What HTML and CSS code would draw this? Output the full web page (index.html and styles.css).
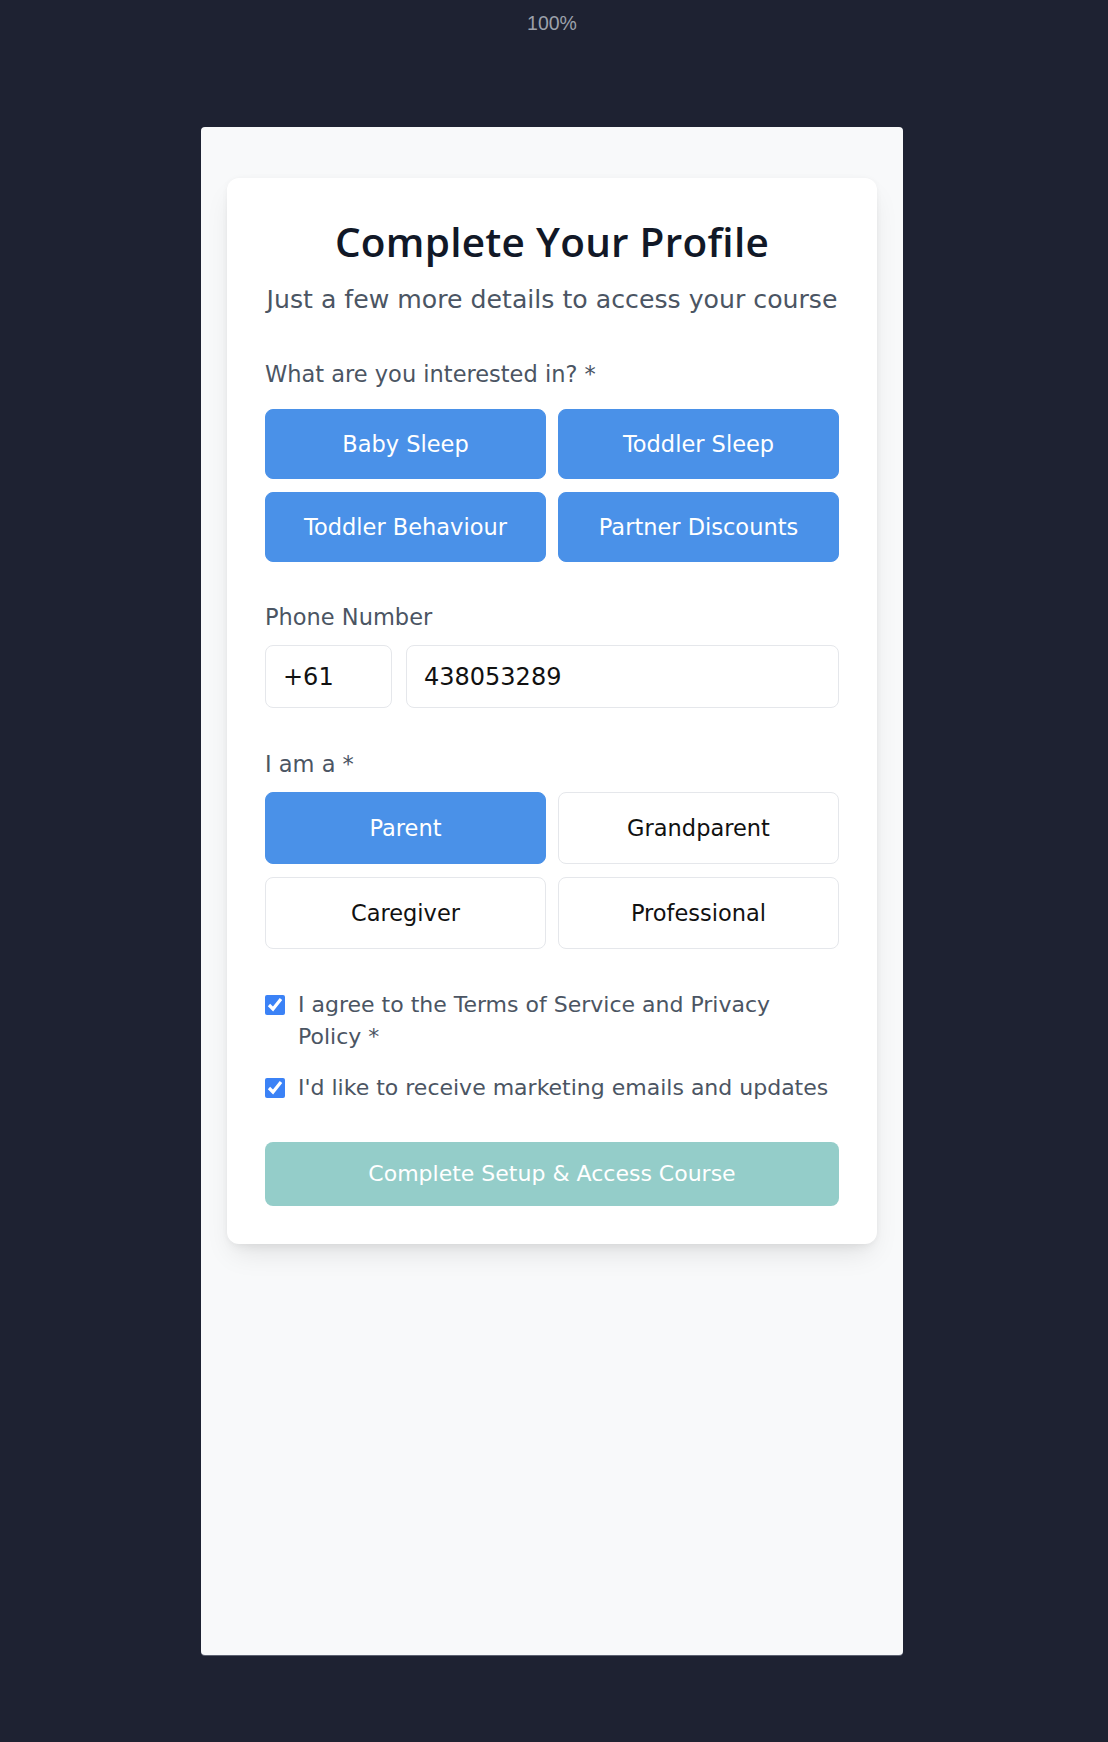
FILE: index.html
```html
<!DOCTYPE html>
<html lang="en">
<head>
<meta charset="utf-8">
<title>Complete Your Profile</title>
<link rel="stylesheet" href="styles.css">
</head>
<body>
<div class="page">
  <div class="zoombar">100%</div>
  <div class="frame">
    <div class="card">
      <h1 class="title">Complete Your Profile</h1>
      <p class="subtitle">Just a few more details to access your course</p>

      <section class="field field-interest">
        <div class="label">What are you interested in? *</div>
        <div class="choice-grid grid-interest">
          <div class="choice selected">Baby Sleep</div>
          <div class="choice selected">Toddler Sleep</div>
          <div class="choice selected">Toddler Behaviour</div>
          <div class="choice selected">Partner Discounts</div>
        </div>
      </section>

      <section class="field field-phone">
        <div class="label">Phone Number</div>
        <div class="phone-row">
          <div class="input">+61</div>
          <div class="input">438053289</div>
        </div>
      </section>

      <section class="field field-role">
        <div class="label">I am a *</div>
        <div class="choice-grid grid-role">
          <div class="choice selected">Parent</div>
          <div class="choice">Grandparent</div>
          <div class="choice">Caregiver</div>
          <div class="choice">Professional</div>
        </div>
      </section>

      <section class="field consents">
        <label class="consent">
          <input type="checkbox" checked>
          <span>I agree to the Terms of Service and Privacy Policy *</span>
        </label>
        <label class="consent">
          <input type="checkbox" checked>
          <span>I'd like to receive marketing emails and updates</span>
        </label>
      </section>

      <div class="submit">Complete Setup &amp; Access Course</div>
    </div>
  </div>
</div>
</body>
</html>
```

FILE: styles.css
```css
html, body {
  margin: 0;
  padding: 0;
}

body {
  background: #1e2232;
  font-family: "DejaVu Sans", "Liberation Sans", sans-serif;
  height: 1742px;
  overflow: hidden;
}

.page {
  width: 1104px;
}

.zoombar {
  box-sizing: border-box;
  height: 127px;
  padding-top: 10.5px;
  font-family: "Liberation Sans", Arial, sans-serif;
  font-size: 19.5px;
  line-height: 24px;
  color: #9ca1ab;
  text-align: center;
}

.frame {
  box-sizing: border-box;
  width: 702px;
  height: 1528px;
  margin: 0 auto;
  padding: 51px 26px 0;
  background: #f8f9fa;
  border-radius: 4px;
  box-shadow: 0 1px 0 #5d6272;
}

.card {
  background: #ffffff;
  border-radius: 12px;
  padding: 38px;
  box-shadow: 0 14px 28px -6px rgba(0, 0, 0, 0.10), 0 6px 12px -4px rgba(0, 0, 0, 0.06), 0 0 6px rgba(0, 0, 0, 0.03);
}

.title {
  margin: 0;
  font-family: "Open Sans", "DejaVu Sans", sans-serif;
  font-weight: 600;
  font-size: 40.5px;
  letter-spacing: 0.25px;
  line-height: 51px;
  color: #111827;
  text-align: center;
}

.subtitle {
  margin: 15px 0 0;
  font-size: 25.2px;
  line-height: 36px;
  color: #4b5563;
  text-align: center;
}

.field {
  margin-top: 40px;
}

.field-phone {
  margin-top: 39px;
}

.label {
  font-size: 22.5px;
  line-height: 32px;
  color: #4b5563;
  margin-bottom: 12px;
}

.field-interest .label {
  margin-bottom: 19px;
}

.choice-grid {
  display: grid;
  grid-template-columns: 1fr 1fr;
  column-gap: 12px;
  row-gap: 13px;
}

.grid-interest {
  grid-auto-rows: 70px;
}

.grid-role {
  grid-auto-rows: 72px;
}

.choice {
  box-sizing: border-box;
  display: flex;
  align-items: center;
  justify-content: center;
  border: 1px solid #e5e7eb;
  border-radius: 8px;
  background: #ffffff;
  color: #111111;
  font-size: 22.5px;
}

.choice.selected {
  background: #4a91e8;
  border-color: #4a91e8;
  color: #ffffff;
}

.phone-row {
  display: grid;
  grid-template-columns: 127px 1fr;
  gap: 14px;
}

.input {
  box-sizing: border-box;
  height: 63px;
  display: flex;
  align-items: center;
  padding: 0 17px;
  border: 1px solid #e5e7eb;
  border-radius: 8px;
  background: #ffffff;
  font-size: 24px;
  color: #111111;
}

.consents {
  display: flex;
  flex-direction: column;
  gap: 20px;
}

.consent {
  display: flex;
  align-items: flex-start;
  gap: 13px;
  font-size: 22px;
  line-height: 31.7px;
  color: #4b5563;
}

.consent input {
  flex: none;
  width: 20px;
  height: 20px;
  margin: 6px 0 0;
  accent-color: #3b82f6;
}

.submit {
  margin-top: 38px;
  height: 63.5px;
  display: flex;
  align-items: center;
  justify-content: center;
  border-radius: 8px;
  background: #94cdc9;
  color: #ffffff;
  font-size: 22px;
}
```
